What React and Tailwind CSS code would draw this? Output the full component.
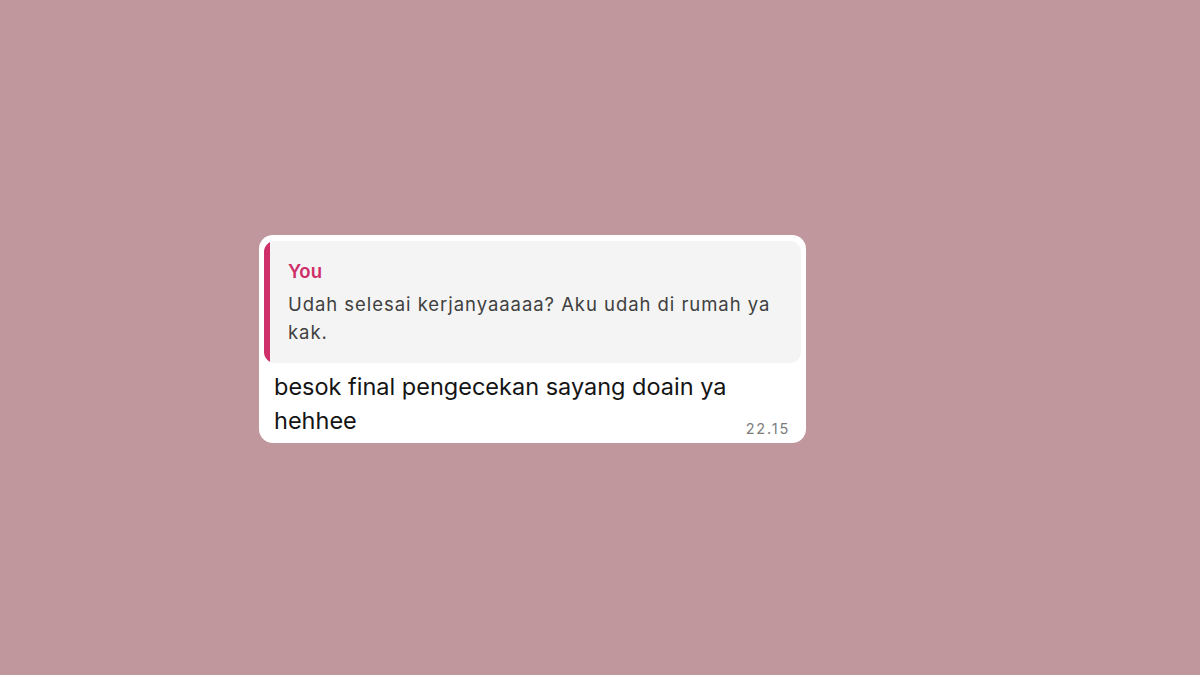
export default function App() {
  return (
    <div className="w-[1200px] h-[675px] bg-[#c0979c] pt-[235px] pl-[259px]" style={{ fontFamily: 'Inter, "Noto Sans", sans-serif' }}>
      <div className="relative w-[547px] h-[208px] bg-white rounded-[14px] p-[5px] pt-[6px]">
        <div className="flex h-[122px] bg-[#f4f4f4] rounded-[11px] overflow-hidden">
          <div className="w-[6px] bg-[#d0306a] shrink-0"></div>
          <div className="pl-[18px] pr-[16px] pt-[18px]">
            <div className="text-[18.5px] leading-[24px] font-semibold text-[#cf2f68]">You</div>
            <div className="text-[18.5px] leading-[27.5px] tracking-[0.95px] text-[#404040] mt-[8px]">Udah selesai kerjanyaaaaa? Aku udah di rumah ya kak.</div>
          </div>
        </div>
        <div className="pl-[10px] pr-[40px] pt-[7px]">
          <div className="text-[23.5px] leading-[34px] text-[#141414]">besok final pengecekan sayang doain ya hehhee</div>
        </div>
        <div className="absolute right-[16px] bottom-[6px] text-[14.5px] leading-[17px] tracking-[1.8px] text-[#7c7c7c]">22.15</div>
      </div>
    </div>
  );
}
